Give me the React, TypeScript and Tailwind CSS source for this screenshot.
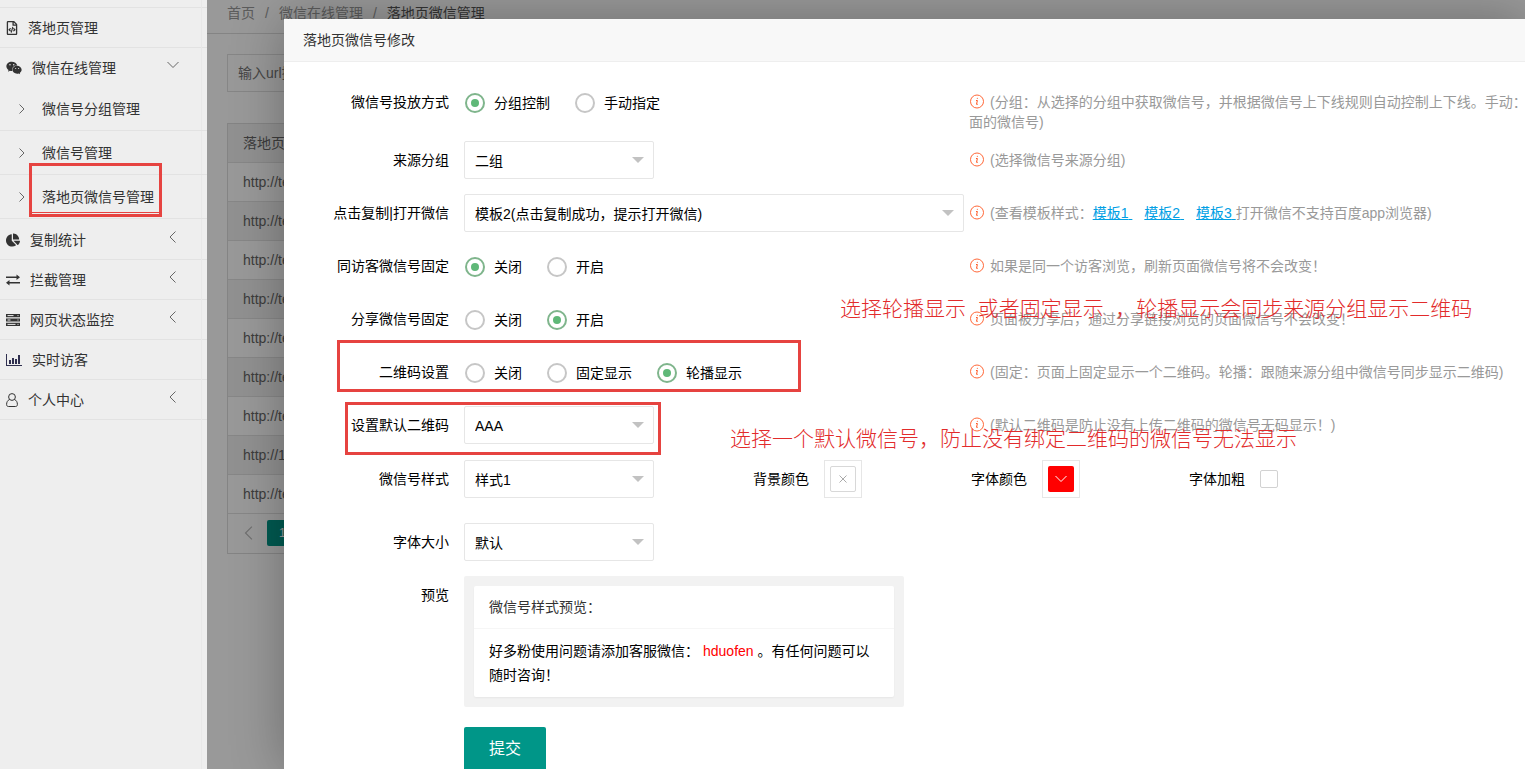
import type { ReactNode } from 'react'
import { clsx } from 'clsx'
import { FaChartPie, FaRegFileCode, FaWeixin } from 'react-icons/fa'

const ExchangeIcon = () => (
	<svg
		className="w-[14px]"
		fill="currentColor"
		viewBox="0 0 14 12"
	>
		<path d="M0 2.500h10.500V.5L14 3.300 10.500 6V4H0zM14 8H3.500V6L0 8.800l3.500 2.700V9.500H14z" />
	</svg>
)

const ServerIcon = () => (
	<svg
		className="w-[14px]"
		viewBox="0 0 14 12"
	>
		<path
			d="M0 0h14v3.200H0zM0 4.400h14v3.200H0zM0 8.800h14V12H0z"
			fill="currentColor"
		/>
		<path
			d="M1.500 1.600h6M1.500 6h3M1.500 10.400h8M11.500 1.600h1M11.500 6h1M11.500 10.400h1"
			stroke="#eee"
			strokeWidth="1"
		/>
	</svg>
)

const BarChartIcon = () => (
	<svg
		className="w-4 text-[#2f2f4f]"
		fill="currentColor"
		viewBox="0 0 16 13"
	>
		<path d="M0 1h1v11h15v1H0zM3 7h2v4H3zM6 5h2v6H6zM9 6h2v5H9zM12 2h2v9h-2z" />
	</svg>
)

const UserIcon = () => (
	<svg
		className="w-3"
		fill="none"
		stroke="currentColor"
		viewBox="0 0 12 14"
	>
		<circle
			cx="6"
			cy="4"
			r="3.400"
		/>
		<path d="M3.500 6.500C1.500 7.400.6 9.200.6 11.400c0 1.400.7 2.100 1.800 2.100h7.200c1.100 0 1.800-.7 1.800-2.100 0-2.200-.9-4-2.900-4.900" />
	</svg>
)

const InfoIcon = () => (
	<svg
		className="mr-[5px] inline-block size-4 align-[-3px] text-[#ff5722]"
		fill="none"
		stroke="currentColor"
		viewBox="0 0 16 16"
	>
		<circle
			cx="8"
			cy="7.500"
			r="6.500"
			strokeWidth="0.900"
		/>
		<path
			d="M7 6.500h1.400l-.9 3.800h1.300M8.400 3.900l-.1.900"
			strokeWidth="1"
		/>
	</svg>
)

const Chevron = ({ className, points }: { className: string; points: string }) => (
	<svg
		className={className}
		fill="none"
		stroke="currentColor"
		viewBox="0 0 12 12"
	>
		<polyline points={points} />
	</svg>
)

const LEFT = '8.500,0.500 3,6 8.500,11.500'
const RIGHT = '3.500,1.500 8,6 3.500,10.500'
const DOWN = '0.500,3 6,8.500 11.500,3'

const subMenu = ['微信号分组管理', '微信号管理', '落地页微信号管理']

const menu = [
	{ label: '复制统计', icon: <FaChartPie className="size-[14px]" />, arrow: true },
	{ label: '拦截管理', icon: <ExchangeIcon />, arrow: true },
	{ label: '网页状态监控', icon: <ServerIcon />, arrow: true },
	{ label: '实时访客', icon: <BarChartIcon />, arrow: false },
	{ label: '个人中心', icon: <UserIcon />, arrow: true },
]

const urls = [
	'http://test',
	'http://test',
	'http://test',
	'http://test',
	'http://test',
	'http://test',
	'http://test',
	'http://1',
	'http://test',
]

type MenuItemProps = {
	label: string
	icon: ReactNode
	arrow?: string
	className?: string
}

const MenuItem = ({ label, icon, arrow, className }: MenuItemProps) => (
	<a
		className={clsx('flex items-center pr-7 pl-[6px]', className)}
		href="#"
	>
		{icon}
		<span className="ml-[10px]">{label}</span>
		{arrow && (
			<Chevron
				className="mb-[5px] ml-auto size-3 text-[#666]"
				points={arrow}
			/>
		)}
	</a>
)

const Sidebar = () => (
	<aside className="relative w-[207px] shrink-0 bg-[#eee] text-[#333]">
		<div className="absolute inset-y-0 right-[5px] w-px bg-[#e8e8e8]" />
		<nav>
			<div className="h-2 border-[#e2e2e2] border-b" />
			<MenuItem
				className="h-10 border-[#e2e2e2] border-b"
				icon={<FaRegFileCode className="h-[14px] w-3" />}
				label="落地页管理"
			/>
			<MenuItem
				arrow={DOWN}
				className="h-[39px]"
				icon={<FaWeixin className="size-4" />}
				label="微信在线管理"
			/>
			<ul className="pb-px">
				{subMenu.map((label, i) => (
					<li
						className="relative"
						key={label}
					>
						<a
							className="flex h-11 items-center border-[#e2e2e2] border-b pl-4"
							href="#"
						>
							<Chevron
								className="size-3 text-[#666]"
								points={RIGHT}
							/>
							<span className="ml-[14px]">{label}</span>
						</a>
						{i === 2 && (
							<div className="-top-3 pointer-events-none absolute left-[29px] h-[54px] w-[133px] border-[#e64340] border-[3px] pb-px">
								<div className="h-full border-[#e64340] border-b" />
							</div>
						)}
					</li>
				))}
			</ul>
			{menu.map((item) => (
				<MenuItem
					arrow={item.arrow ? LEFT : undefined}
					className="h-10 border-[#e2e2e2] border-b"
					icon={item.icon}
					key={item.label}
					label={item.label}
				/>
			))}
		</nav>
	</aside>
)

const ListPage = () => (
	<div className="h-full bg-white text-[#666]">
		<div className="flex h-[34px] items-start border-[#ddd] border-b pt-[3px] pl-5 text-[#999] leading-5">
			<a href="#">首页</a>
			<span className="mx-[10px]">/</span>
			<a href="#">微信在线管理</a>
			<span className="mx-[10px]">/</span>
			<span className="text-[#555]">落地页微信管理</span>
		</div>
		<div className="px-5 pt-5">
			<input
				aria-label="url"
				className="h-[38px] w-[190px] border border-[#e0e0e0] bg-transparent px-[10px] placeholder:text-[#757575]"
				placeholder="输入url搜索"
				type="text"
			/>
			<div className="mt-[31px] border border-[#ddd]">
				<table className="w-full text-left">
					<thead>
						<tr className="h-[38px] border-[#e2e2e2] border-b bg-[#f2f2f2]">
							<th className="px-[15px] font-normal">落地页url</th>
						</tr>
					</thead>
					<tbody>
						{urls.map((url, i) => (
							<tr
								className="h-[39px] border-[#e2e2e2] border-b even:bg-[#f2f2f2]"
								key={i}
							>
								<td className="px-[15px]">{url}</td>
							</tr>
						))}
					</tbody>
				</table>
				<div className="flex h-[39px] items-center pl-[14px]">
					<Chevron
						className="size-[14px] text-[#bbb]"
						points={LEFT}
					/>
					<button
						className="ml-[11px] h-[26px] rounded-[2px] bg-[#009688] px-3 text-white text-xs"
						type="button"
					>
						1
					</button>
				</div>
			</div>
		</div>
	</div>
)

const Hint = ({ children }: { children: ReactNode }) => (
	<div className="ml-[5px] whitespace-nowrap py-[9px] text-[#999] leading-5">
		<InfoIcon />
		{children}
	</div>
)

type RowProps = {
	label: string
	htmlFor?: string
	hint?: ReactNode
	className?: string
	children: ReactNode
	overlay?: ReactNode
}

const Row = ({ label, htmlFor, hint, className = 'mb-[15px]', children, overlay }: RowProps) => (
	<div className={clsx('relative flex items-start', className)}>
		<label
			className="w-[180px] shrink-0 py-[9px] pr-[15px] text-right leading-5"
			htmlFor={htmlFor}
		>
			{label}
		</label>
		<div className="w-[500px] shrink-0">{children}</div>
		{hint && <Hint>{hint}</Hint>}
		{overlay}
	</div>
)

const Select = ({ id, value, wide }: { id: string; value: string; wide?: boolean }) => (
	<div className={clsx('relative shrink-0', wide ? 'w-full' : 'w-[190px]')}>
		<select
			className="h-[38px] w-full appearance-none rounded-[2px] border border-[#e6e6e6] bg-white px-[10px] pt-px"
			id={id}
		>
			<option>{value}</option>
		</select>
		<svg
			className="pointer-events-none absolute top-4 right-[10px] h-[6px] w-3"
			fill="#c2c2c2"
			viewBox="0 0 12 6"
		>
			<path d="M0 0h12L6 6z" />
		</svg>
	</div>
)

const Radios = ({ name, options, checked }: { name: string; options: string[]; checked: string }) => (
	<div className="flex h-[38px] items-center gap-6 pt-px">
		{options.map((option) => (
			<label
				className="flex items-center"
				key={option}
			>
				<input
					className="mr-[9px] ml-px grid size-5 appearance-none place-items-center rounded-full border-2 border-[#c6c6c6] bg-white checked:border-[#7fb58c] checked:before:size-2 checked:before:rounded-full checked:before:bg-[#5fb878]"
					defaultChecked={option === checked}
					name={name}
					type="radio"
				/>
				{option}
			</label>
		))}
	</div>
)

const Note = ({ className, children }: { className: string; children: string }) => (
	<p
		className={clsx(
			'pointer-events-none absolute whitespace-pre font-light text-[#e22b2b] text-[21px] leading-[21px]',
			className,
		)}
	>
		{children}
	</p>
)

const TemplateLink = ({ children }: { children: ReactNode }) => (
	<a
		className="text-[#01a0e4] underline"
		href="#"
	>
		{children}&nbsp;
	</a>
)

const EditForm = () => (
	<form className="pt-[21px] text-black">
		<Row
			className="mb-0"
			hint={
				<>
					(分组：从选择的分组中获取微信号，并根据微信号上下线规则自动控制上下线。手动：
					<br />
					面的微信号)
				</>
			}
			label="微信号投放方式"
		>
			<Radios
				checked="分组控制"
				name="mode"
				options={['分组控制', '手动指定']}
			/>
		</Row>
		<Row
			hint="(选择微信号来源分组)"
			htmlFor="group"
			label="来源分组"
		>
			<Select
				id="group"
				value="二组"
			/>
		</Row>
		<Row
			hint={
				<>
					(查看模板样式：<TemplateLink>模板1</TemplateLink>
					<span className="mx-3">
						<TemplateLink>模板2</TemplateLink>
					</span>
					<TemplateLink>模板3</TemplateLink>打开微信不支持百度app浏览器)
				</>
			}
			htmlFor="template"
			label="点击复制|打开微信"
		>
			<Select
				id="template"
				value="模板2(点击复制成功，提示打开微信)"
				wide
			/>
		</Row>
		<Row
			hint="如果是同一个访客浏览，刷新页面微信号将不会改变！"
			label="同访客微信号固定"
		>
			<Radios
				checked="关闭"
				name="visitor"
				options={['关闭', '开启']}
			/>
		</Row>
		<Row
			hint="页面被分享后，通过分享链接浏览的页面微信号不会改变！"
			label="分享微信号固定"
			overlay={
				<Note className="-top-[2px] left-[556px]">
					{'选择轮播显示  或者固定显示  ，轮播显示会同步来源分组显示二维码'}
				</Note>
			}
		>
			<Radios
				checked="开启"
				name="share"
				options={['关闭', '开启']}
			/>
		</Row>
		<Row
			hint="(固定：页面上固定显示一个二维码。轮播：跟随来源分组中微信号同步显示二维码)"
			label="二维码设置"
			overlay={
				<div className="-top-[13px] pointer-events-none absolute left-[53px] h-[52px] w-[464px] border-[#e64340] border-[3px]" />
			}
		>
			<Radios
				checked="轮播显示"
				name="qrcode"
				options={['关闭', '固定显示', '轮播显示']}
			/>
		</Row>
		<Row
			className="mb-4"
			hint="(默认二维码是防止没有上传二维码的微信号无码显示！)"
			htmlFor="defaultQr"
			label="设置默认二维码"
			overlay={
				<>
					<div className="-top-1 pointer-events-none absolute left-[61px] h-[53px] w-[316px] border-[#e64340] border-[3px]" />
					<Note className="top-[22px] left-[446px]">
						选择一个默认微信号，防止没有绑定二维码的微信号无法显示
					</Note>
				</>
			}
		>
			<Select
				id="defaultQr"
				value="AAA"
			/>
		</Row>
		<Row
			className="mb-[25px]"
			htmlFor="style"
			label="微信号样式"
		>
			<div className="flex items-center whitespace-nowrap">
				<Select
					id="style"
					value="样式1"
				/>
				<label
					className="w-[170px] shrink-0 pr-[15px] text-right"
					htmlFor="bgColor"
				>
					背景颜色
				</label>
				<button
					className="size-[38px] shrink-0 border border-[#e6e6e6] p-[5px]"
					id="bgColor"
					type="button"
				>
					<span className="grid size-[26px] place-items-center rounded-[2px] border border-[#d8d8d8] text-[#aaa]">
						<svg
							className="size-2"
							stroke="currentColor"
							viewBox="0 0 8 8"
						>
							<path d="M.5.5l7 7M7.500.5l-7 7" />
						</svg>
					</span>
				</button>
				<label
					className="w-[180px] shrink-0 pr-[15px] text-right"
					htmlFor="fontColor"
				>
					字体颜色
				</label>
				<button
					className="size-[38px] shrink-0 border border-[#e6e6e6] p-[5px]"
					id="fontColor"
					type="button"
				>
					<span className="grid size-[26px] place-items-center rounded-[2px] bg-[#f00] text-white">
						<Chevron
							className="size-3"
							points={DOWN}
						/>
					</span>
				</button>
				<label
					className="w-[180px] shrink-0 pr-[15px] text-right"
					htmlFor="bold"
				>
					字体加粗
				</label>
				<input
					className="size-[18px] shrink-0 appearance-none rounded-[2px] border border-[#d2d2d2] bg-white"
					id="bold"
					type="checkbox"
				/>
			</div>
		</Row>
		<Row
			htmlFor="size"
			label="字体大小"
		>
			<Select
				id="size"
				value="默认"
			/>
		</Row>
		<Row
			className="mb-5"
			label="预览"
		>
			<div className="w-[440px] rounded-[2px] bg-[#f2f2f2] p-[10px]">
				<div className="rounded-[2px] bg-white shadow-xs">
					<h3 className="border-[#f6f6f6] border-b px-[15px] text-[#333] leading-[42px]">
						微信号样式预览：
					</h3>
					<p className="px-[15px] py-[10px] leading-6">
						好多粉使用问题请添加客服微信：
						<span className="mx-1 text-[#f00]">hduofen</span>
						。有任何问题可以随时咨询！
					</p>
				</div>
			</div>
		</Row>
		<button
			className="ml-[180px] h-11 rounded-[2px] bg-[#009688] px-[25px] text-base text-white"
			type="submit"
		>
			提交
		</button>
	</form>
)

export default function App() {
	return (
		<div className="flex h-screen overflow-hidden font-['Liberation_Sans','Noto_Sans_CJK_SC',sans-serif] text-sm">
			<Sidebar />
			<main className="relative min-w-0 flex-1 overflow-hidden">
				<ListPage />
				<div className="absolute inset-0 bg-black/40" />
				<section
					aria-label="落地页微信号修改"
					className="absolute top-[19px] right-0 bottom-0 left-[77px] overflow-hidden bg-white shadow-[1px_1px_50px_rgba(0,0,0,0.3)]"
					role="dialog"
				>
					<h2 className="border-[#eee] border-b bg-[#f8f8f8] pl-[19px] text-[#333] leading-[42px]">
						落地页微信号修改
					</h2>
					<EditForm />
				</section>
			</main>
		</div>
	)
}
